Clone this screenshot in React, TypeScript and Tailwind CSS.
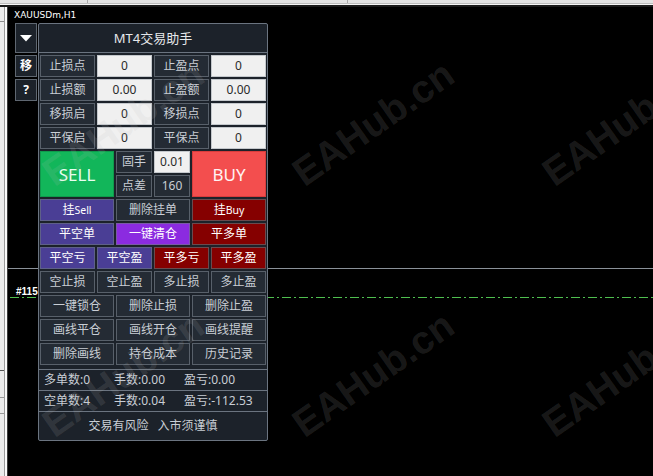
import React from "react";

type Tone = "label" | "input" | "purple" | "maroon" | "violet";

const TONE: Record<Tone, string> = {
  label: "bg-[#242b34] border-[#58606a] text-[#c9ced5]",
  input: "bg-[#f0f0f0] border-[#c4c8cc] text-[#2a2a2a]",
  purple: "bg-[#4a3e95] border-[#5e6088] text-white",
  maroon: "bg-[#850000] border-[#6a4a4e] text-white",
  violet: "bg-[#8b2be0] border-[#7a5aa6] text-white",
};

const FONT = "font-['Noto_Sans','Noto_Sans_CJK_SC',sans-serif]";

function Cell({
  tone = "label",
  className = "",
  children,
}: {
  tone?: Tone;
  className?: string;
  children: React.ReactNode;
}) {
  return (
    <div
      className={`flex h-[22px] items-center justify-center border text-[12px] leading-none ${TONE[tone]} ${className}`}
    >
      {children}
    </div>
  );
}

type Item = [React.ReactNode, Tone];

function Row4({ items }: { items: Item[] }) {
  return (
    <div className="grid grid-cols-4 gap-x-[2px]">
      {items.map(([t, tone], i) => (
        <Cell key={i} tone={tone}>
          {t}
        </Cell>
      ))}
    </div>
  );
}

function Row3({ items }: { items: Item[] }) {
  return (
    <div className="grid grid-cols-3 gap-x-[2px]">
      {items.map(([t, tone], i) => (
        <Cell key={i} tone={tone}>
          {t}
        </Cell>
      ))}
    </div>
  );
}

const MARKS = [
  "left-[123px] top-[123px]",
  "left-[373px] top-[123px]",
  "left-[623px] top-[123px]",
  "left-[123px] top-[374px]",
  "left-[373px] top-[374px]",
  "left-[623px] top-[374px]",
];

function SideButton({ className = "", children }: { className?: string; children: React.ReactNode }) {
  return (
    <div
      className={`flex w-[22px] items-center justify-center border border-[#5f6771] bg-[#1c222a] text-[12px] font-bold leading-none text-white ${className}`}
    >
      {children}
    </div>
  );
}

function TradePanel() {
  return (
    <div className={`w-[230px] rounded-[2px] border border-[#6b7480] bg-[#1c222a] ${FONT}`}>
      <div className="flex h-[29px] items-center justify-center border-b border-[#6b7480] text-[13px] leading-none text-[#e6e8eb]">
        MT4交易助手
      </div>

      <div className="flex flex-col gap-y-[2px] px-[1px] pb-[4px] pt-[2px]">
        <Row4 items={[["止损点", "label"], ["0", "input"], ["止盈点", "label"], ["0", "input"]]} />
        <Row4 items={[["止损额", "label"], ["0.00", "input"], ["止盈额", "label"], ["0.00", "input"]]} />
        <Row4 items={[["移损启", "label"], ["0", "input"], ["移损点", "label"], ["0", "input"]]} />
        <Row4 items={[["平保启", "label"], ["0", "input"], ["平保点", "label"], ["0", "input"]]} />

        <div className="grid h-[46px] grid-cols-3 gap-x-[2px]">
          <div className="flex items-center justify-center border border-[#0f9a4c] bg-[#12b65a] text-[17px] leading-none text-[#eafff1]">
            SELL
          </div>
          <div className="grid grid-cols-2 grid-rows-2 gap-[2px]">
            <Cell>固手</Cell>
            <Cell tone="input">0.01</Cell>
            <Cell>点差</Cell>
            <Cell>160</Cell>
          </div>
          <div className="flex items-center justify-center border border-[#d83c3c] bg-[#f34e4e] text-[17px] leading-none text-[#fff3f3]">
            BUY
          </div>
        </div>

        <Row3
          items={[
            [
              <span key="s" className="flex items-baseline">
                挂<span className="text-[10.5px]">Sell</span>
              </span>,
              "purple",
            ],
            ["删除挂单", "label"],
            [
              <span key="b" className="flex items-baseline">
                挂<span className="text-[10.5px]">Buy</span>
              </span>,
              "maroon",
            ],
          ]}
        />
        <Row3 items={[["平空单", "purple"], ["一键清仓", "violet"], ["平多单", "maroon"]]} />
        <Row4 items={[["平空亏", "purple"], ["平空盈", "purple"], ["平多亏", "maroon"], ["平多盈", "maroon"]]} />
        <Row4 items={[["空止损", "label"], ["空止盈", "label"], ["多止损", "label"], ["多止盈", "label"]]} />
        <Row3 items={[["一键锁仓", "label"], ["删除止损", "label"], ["删除止盈", "label"]]} />
        <Row3 items={[["画线平仓", "label"], ["画线开仓", "label"], ["画线提醒", "label"]]} />
        <Row3 items={[["删除画线", "label"], ["持仓成本", "label"], ["历史记录", "label"]]} />
      </div>

      <div className="grid h-[21px] grid-cols-[70px_70px_1fr] items-center border-t border-[#6b7480] pl-[5px] text-[12px] leading-none text-[#c9ced5]">
        <span>多单数:0</span>
        <span>手数:0.00</span>
        <span>盈亏:0.00</span>
      </div>
      <div className="grid h-[21px] grid-cols-[70px_70px_1fr] items-center border-t border-[#6b7480] pl-[5px] text-[12px] leading-none text-[#c9ced5]">
        <span>空单数:4</span>
        <span>手数:0.04</span>
        <span>盈亏:-112.53</span>
      </div>
      <div className="flex h-[29px] items-center justify-center gap-[9px] border-t border-[#6b7480] text-[12px] leading-none text-[#c9ced5]">
        <span>交易有风险</span>
        <span>入市须谨慎</span>
      </div>
    </div>
  );
}

export default function App() {
  return (
    <div className="relative flex h-[476px] w-[653px] flex-col overflow-hidden bg-black">
      {/* terminal window edge */}
      <div className="flex h-[7px] shrink-0 flex-col">
        <div className="flex h-[3px] bg-[#e3e3e3]">
          <div className="w-[87px]" />
          <div className="w-[1px] bg-[#a9a9a9]" />
          <div className="w-[259px]" />
          <div className="w-[1px] bg-[#a9a9a9]" />
        </div>
        <div className="h-[1px] bg-[#bdbdbd]" />
        <div className="h-[1px] bg-[#f6f6f6]" />
        <div className="h-[2px] bg-[#1a1a1a]" />
      </div>

      <div className="flex flex-1">
        <div className="flex w-[8px] shrink-0">
          <div className="flex w-[4px] flex-col bg-[#ececec]">
            <div className="h-[14px]" />
            <div className="h-[1px] bg-[#8c8c8c]" />
            <div className="h-[348px]" />
            <div className="h-[1px] bg-[#555]" />
            <div className="h-[26px]" />
            <div className="h-[1px] bg-[#9a9a9a]" />
            <div className="h-[15px]" />
            <div className="h-[1px] bg-[#9a9a9a]" />
          </div>
          <div className="w-[1px] bg-[#9b9b9b]" />
          <div className="w-[2px] bg-[#fbfbfb]" />
          <div className="w-[1px] bg-[#3b3b3b]" />
        </div>

        {/* chart */}
        <div className="relative flex flex-1 flex-col bg-black pl-[6px] pt-[3px]">
          {/* chart objects drawn beneath the panel */}
          <div className="absolute left-0 right-0 top-[261px] h-[1px] bg-[#8a9199]" />
          <svg className="absolute left-0 top-[289px]" width="645" height="3" shapeRendering="crispEdges">
            <line
              x1="2"
              y1="1.5"
              x2="645"
              y2="1.5"
              stroke="#4fbf4f"
              strokeWidth="1"
              strokeDasharray="9 3 2 3"
            />
          </svg>
          <span className="absolute left-[8px] top-[280px] font-['Liberation_Sans',Arial,sans-serif] text-[10px] font-bold leading-none text-white">
            #115
          </span>

          <div className="font-['DejaVu_Sans',sans-serif] text-[9px] leading-[11px] text-white">XAUUSDm,H1</div>

          <div className="relative z-10 ml-[1px] mt-[2px] flex items-start gap-[1px]">
            <div className={`flex flex-col gap-[2px] ${FONT}`}>
              <SideButton className="h-[30px]">
                <svg width="12" height="7" viewBox="0 0 12 7">
                  <polygon points="0,0 12,0 6,6.5" fill="#ffffff" />
                </svg>
              </SideButton>
              <SideButton className="h-[22px]">移</SideButton>
              <SideButton className="h-[22px]">?</SideButton>
            </div>
            <TradePanel />
          </div>
        </div>
      </div>

      {/* site watermark */}
      <div className="pointer-events-none absolute inset-0 z-20">
        {MARKS.map((pos, i) => (
          <span
            key={i}
            className={`absolute ${pos} -translate-x-1/2 -translate-y-1/2 -rotate-[35deg] whitespace-nowrap font-['Liberation_Sans',Arial,sans-serif] text-[39px] font-bold leading-none text-[rgba(190,190,190,0.15)]`}
          >
            EAHub.cn
          </span>
        ))}
      </div>
    </div>
  );
}
